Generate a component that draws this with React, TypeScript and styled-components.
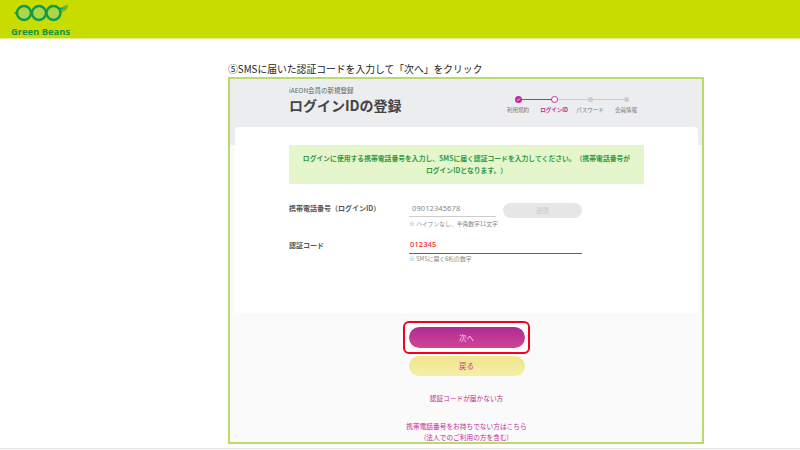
import React from "react";
import styled, { createGlobalStyle } from "styled-components";

const Global = createGlobalStyle`
  html, body { margin: 0; padding: 0; background: #fff; overflow: hidden; }
  body { font-family: "Noto Sans CJK JP", "Noto Sans", sans-serif; text-spacing-trim: space-all; }
`;
const Page = styled.div`width: 800px; height: 450px; overflow: hidden; display: flex; flex-direction: column;`;
const Header = styled.header`height: 38px; background: #c8dc00; flex: none; border-bottom: 1px solid #e6ec8c; padding-left: 11px; display: flex; flex-direction: column;`;
const Logo = styled.svg`width: 60px; height: 22px; display: block; margin-top: 3px; flex: none;`;
const Brand = styled.div`font: bold 9.4px/11px "Open Sans", sans-serif; color: #0f9447; margin-top: 1px; white-space: nowrap;`;
const Main = styled.main`flex: 1; padding: 23px 0 0 228px; display: flex; flex-direction: column; align-items: flex-start;`;
const Caption = styled.h2`margin: 0; font-size: 9.8px; line-height: 14px; font-weight: 400; color: #222; height: 15px; white-space: nowrap;`;
const Frame = styled.section`width: 476px; height: 367px; box-sizing: border-box; border: 2px solid #b9da6c; background: #fafafa; position: relative; display: flex; flex-direction: column; overflow: hidden;`;
const TopBand = styled.div`height: 66px; flex: none; background: #ebedef; padding: 7px 0 0 59px; box-sizing: border-box; display: flex; justify-content: space-between;`;
const Heading = styled.div`display: flex; flex-direction: column;`;
const Sub = styled.div`font-size: 6.5px; line-height: 9px; color: #666;`;
const Title = styled.h1`margin: 0; font-size: 14px; line-height: 20px; font-weight: 700; color: #444;`;
const Steps = styled.ol`list-style: none; margin: 7px 58px 0 0; padding: 0; display: flex;`;
const Step = styled.li<{ $on?: boolean }>`width: 36px; display: flex; flex-direction: column; align-items: center; position: relative; font-size: 5.5px; line-height: 8px; font-weight: ${p => p.$on ? 700 : 400}; color: ${p => p.$on ? "#c02a94" : "#777"}; white-space: nowrap;`;
const Line = styled.span<{ $on?: boolean }>`position: absolute; top: 6px; left: 18px; width: 36px; height: 1px; background: ${p => p.$on ? "#c02a94" : "#ccc"};`;
const DotRow = styled.span`height: 13px; display: flex; align-items: center; justify-content: center; position: relative; z-index: 1; margin-bottom: 0;`;
const Dot = styled.span<{ $kind: "done" | "now" | "todo" }>`
  box-sizing: border-box; border-radius: 50%; display: flex; align-items: center; justify-content: center;
  width: ${p => p.$kind === "todo" ? 5 : 7}px; height: ${p => p.$kind === "todo" ? 5 : 7}px;
  background: ${p => p.$kind === "done" ? "#c02a94" : p.$kind === "now" ? "#fff" : "#ccc"};
  border: ${p => p.$kind === "now" ? "1.5px solid #c02a94" : "none"};
`;
const Card = styled.div`margin: -18px 4px 0 5px; height: 186px; flex: none; box-sizing: border-box; background: #fff; border-radius: 3px 3px 0 0; padding: 18px 54px 0; position: relative;`;
const Notice = styled.div`height: 39px; box-sizing: border-box; background: #e5f6cc; border-radius: 1px; color: #2e9b45; font-size: 6.82px; line-height: 11.5px; font-weight: 700; text-align: center; padding: 8px 0 0; white-space: nowrap;`;
const Row = styled.div`display: flex; margin-top: 15px; align-items: flex-start;`;
const RowTall = styled(Row)`margin-top: 8px;`;
const Label = styled.label`width: 120px; flex: none; font-size: 7px; line-height: 12px; font-weight: 700; color: #555; padding-top: 3px; white-space: nowrap;`;
const Field = styled.div`display: flex; flex-direction: column;`;
const Controls = styled.div`display: flex; align-items: flex-start;`;
const Input = styled.div<{ $active?: boolean }>`
  width: ${p => p.$active ? "173px" : "87px"}; height: 18px; box-sizing: border-box;
  padding: ${p => p.$active ? "2px 1px 0" : "3px 3px 0"};
  border-bottom: 1px solid ${p => p.$active ? "#c02a94" : "#ccc"};
  font: ${p => p.$active ? 500 : 400} 7.5px/12px "Noto Sans", sans-serif; color: ${p => p.$active ? "#f5222d" : "#888"};
  letter-spacing: 0.1px;
`;
const Send = styled.button`width: 79px; height: 15px; margin: 4px 0 0 7px; border: 0; border-radius: 8px; background: #e6e6e6; color: #ccc; font: 6.5px/15px "Noto Sans CJK JP", sans-serif; padding: 0;`;
const Hint = styled.div<{ $tight?: boolean }>`font-size: 5.8px; line-height: 8px; color: #888; margin-top: ${p => p.$tight ? 1 : 2}px; white-space: nowrap;`;
const Footer = styled.div`flex: 1; display: flex; flex-direction: column; align-items: center; padding: 8px 0 0 1px;`;
const Highlight = styled.div`box-sizing: border-box; width: 127px; height: 33px; border: 2px solid #f5001e; border-radius: 6px; display: flex; align-items: center; justify-content: center; background: #fff;`;
const Primary = styled.button`width: 116px; height: 21px; border: 0; padding: 0; border-radius: 11px; background: linear-gradient(#ac2c93, #d24594); color: #f4d6ea; font: 7.5px/21px "Noto Sans CJK JP", sans-serif;`;
const Secondary = styled.button`width: 116px; height: 20px; margin-top: 2px; border: 0; padding: 0; border-radius: 10px; background: linear-gradient(#f0e68c, #f5eea8); color: #c2409a; font: 7.5px/20px "Noto Sans CJK JP", sans-serif;`;
const LinkText = styled.a<{ $gap: number }>`display: block; margin-top: ${p => p.$gap}px; color: #c02a94; font-size: 6.7px; line-height: 11px; text-align: center; white-space: nowrap;`;
const BottomRule = styled.div`height: 1px; background: #e2e2e2; position: absolute; left: 0; right: 0; top: 448px;`;

const steps = [
  { t: "利用規約", k: "done" as const, on: true },
  { t: "ログインID", k: "now" as const, on: false },
  { t: "パスワード", k: "todo" as const, on: false },
  { t: "会員情報", k: "todo" as const, on: false },
];

export default function App() {
  return (
    <Page>
      <Global />
      <Header>
        <Logo viewBox="0 0 60 22">
          <path d="M3 10 L6 8 L8 10 L6 12Z" fill="#0e9c4a" />
          <path d="M50 8 C50 4 53 2 57 2 C57 6 54 9 50 9Z" fill="#6fb52c" />
          <path d="M47 6 L52 5" stroke="#0e9c4a" strokeWidth="1.5" fill="none" />
          <circle cx="13" cy="10" r="7" fill="#aed64a" stroke="#0e9c4a" strokeWidth="2.4" />
          <circle cx="28" cy="10" r="7" fill="#aed64a" stroke="#0e9c4a" strokeWidth="2.4" />
          <circle cx="42.5" cy="10" r="7" fill="#aed64a" stroke="#0e9c4a" strokeWidth="2.4" />
        </Logo>
        <Brand>Green Beans</Brand>
      </Header>
      <Main>
        <Caption>⑤SMSに届いた認証コードを入力して「次へ」をクリック</Caption>
        <Frame>
          <TopBand>
            <Heading>
              <Sub>iAEON会員の新規登録</Sub>
              <Title>ログインIDの登録</Title>
            </Heading>
            <Steps>
              {steps.map((s, i) => (
                <Step key={s.t} $on={s.k === "now"}>
                  {i < 3 && <Line $on={s.on} />}
                  <DotRow>
                    <Dot $kind={s.k}>
                      {s.k === "done" && (
                        <svg width="5" height="5" viewBox="0 0 10 10"><path d="M2 5l2 2 4-4" fill="none" stroke="#fff" strokeWidth="1.6" /></svg>
                      )}
                    </Dot>
                  </DotRow>
                  {s.t}
                </Step>
              ))}
            </Steps>
          </TopBand>
          <Card>
            <Notice>ログインに使用する携帯電話番号を入力し、SMSに届く認証コードを入力してください。（携帯電話番号が<br />ログインIDとなります。）</Notice>
            <Row>
              <Label>携帯電話番号（ログインID）</Label>
              <Field>
                <Controls>
                  <Input>09012345678</Input>
                  <Send disabled>送信</Send>
                </Controls>
                <Hint>※ ハイフンなし、半角数字11文字</Hint>
              </Field>
            </Row>
            <RowTall>
              <Label>認証コード</Label>
              <Field>
                <Input $active>012345</Input>
                <Hint $tight>※ SMSに届く6桁の数字</Hint>
              </Field>
            </RowTall>
          </Card>
          <Footer>
            <Highlight><Primary>次へ</Primary></Highlight>
            <Secondary>戻る</Secondary>
            <LinkText $gap={17}>認証コードが届かない方</LinkText>
            <LinkText $gap={17}>携帯電話番号をお持ちでない方はこちら<br />(法人でのご利用の方を含む)</LinkText>
          </Footer>
        </Frame>
      </Main>
      <BottomRule />
    </Page>
  );
}
